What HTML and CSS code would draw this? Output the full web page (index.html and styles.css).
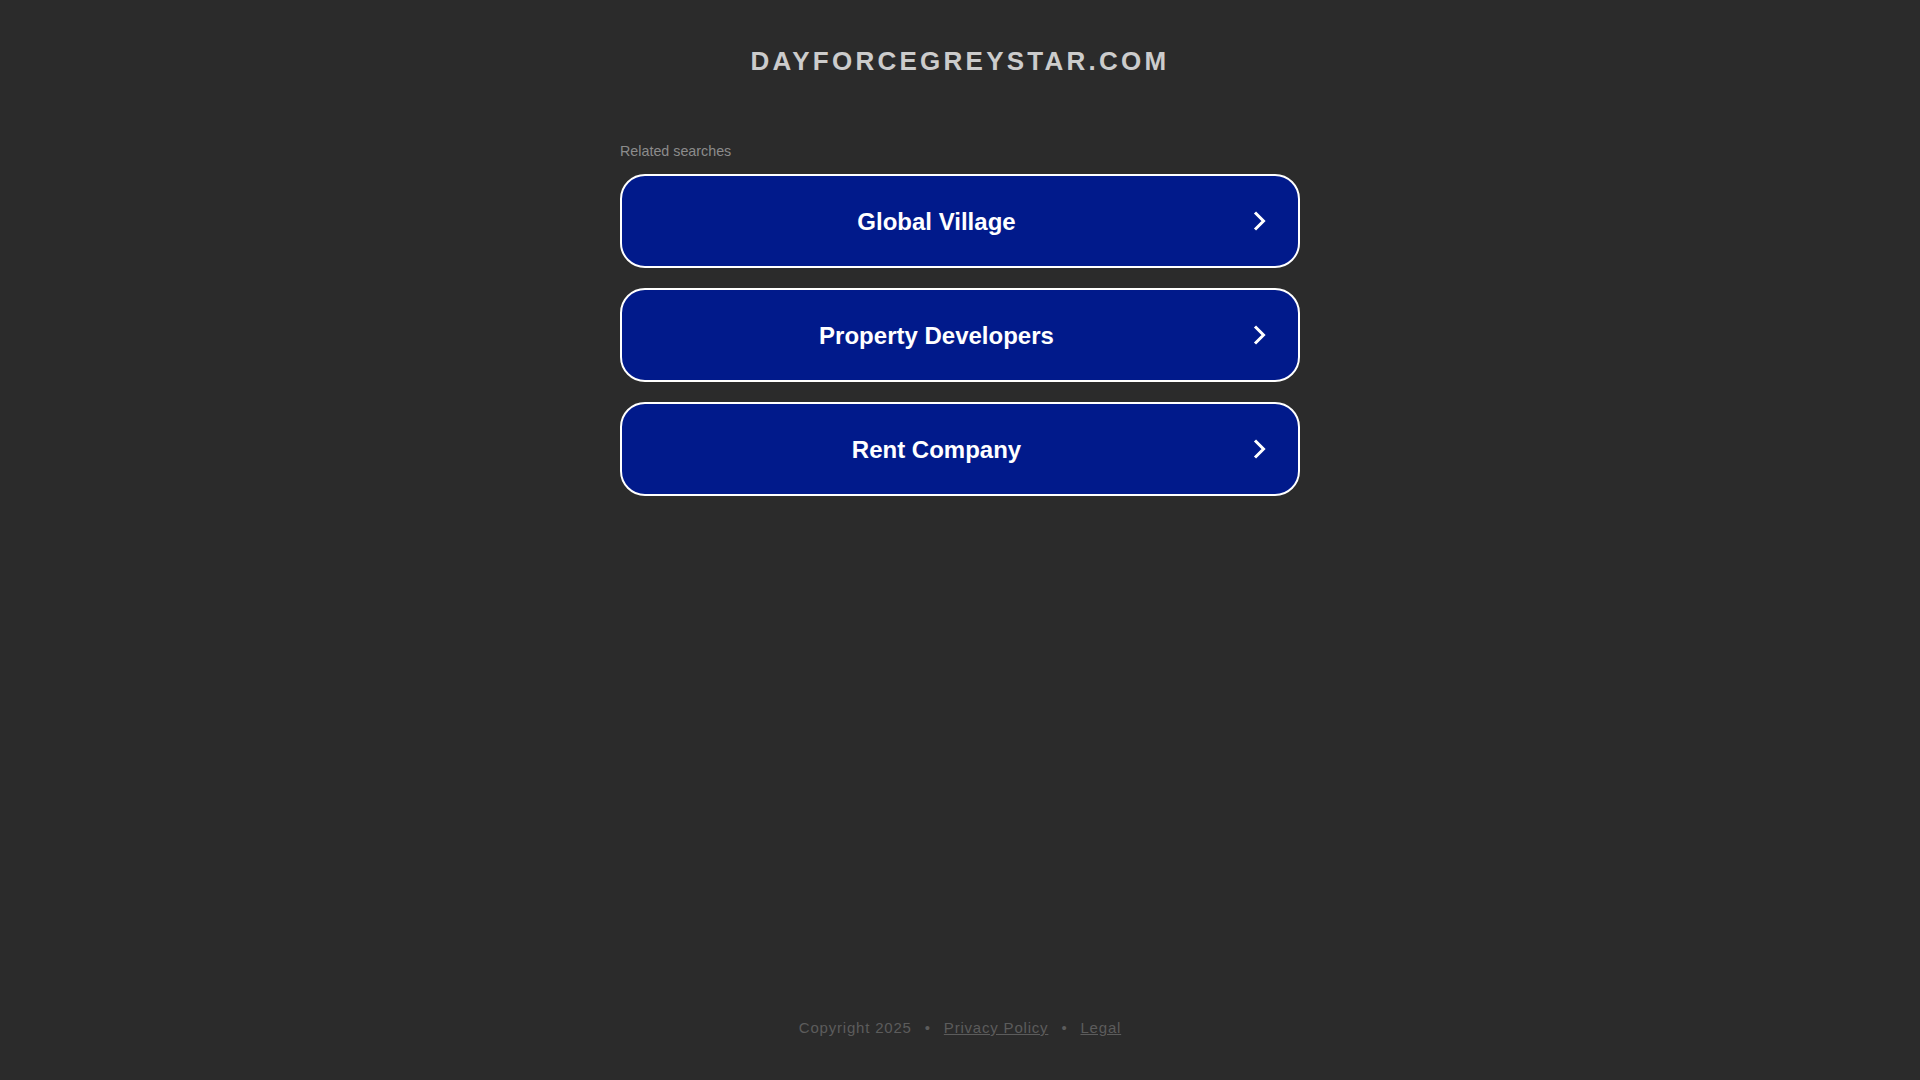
FILE: index.html
```html
<!DOCTYPE html>
<html lang="en">
<head>
<meta charset="utf-8">
<title>dayforcegreystar.com</title>
<link rel="stylesheet" href="styles.css">
</head>
<body>
<div class="page">
  <header class="header">
    <h1 class="domain">dayforcegreystar.com</h1>
  </header>
  <main class="main">
    <div class="related">Related searches</div>
    <ul class="links">
      <li><a class="link" href="#"><span class="label">Global Village</span><svg class="chev" viewBox="0 0 16 24" width="16" height="24"><path d="M4 3.5 L12.5 12 L4 20.5" fill="none" stroke="#fff" stroke-width="3"/></svg></a></li>
      <li><a class="link" href="#"><span class="label">Property Developers</span><svg class="chev" viewBox="0 0 16 24" width="16" height="24"><path d="M4 3.5 L12.5 12 L4 20.5" fill="none" stroke="#fff" stroke-width="3"/></svg></a></li>
      <li><a class="link" href="#"><span class="label">Rent Company</span><svg class="chev" viewBox="0 0 16 24" width="16" height="24"><path d="M4 3.5 L12.5 12 L4 20.5" fill="none" stroke="#fff" stroke-width="3"/></svg></a></li>
    </ul>
  </main>
  <footer class="footer">
    <span>Copyright 2025</span>
    <span class="dot">•</span>
    <a href="#">Privacy Policy</a>
    <span class="dot">•</span>
    <a href="#">Legal</a>
  </footer>
</div>
</body>
</html>
```

FILE: styles.css
```css
html, body {
  margin: 0;
  padding: 0;
  background: #2b2b2b;
  font-family: "Liberation Sans", Arial, sans-serif;
}

.page {
  min-height: 100vh;
  display: flex;
  flex-direction: column;
  align-items: center;
}

.header {
  padding-top: 46px;
}

.domain {
  margin: 0;
  font-size: 26px;
  line-height: 30px;
  font-weight: 700;
  letter-spacing: 3.25px;
  text-transform: uppercase;
  color: #cccccc;
  text-align: center;
}

.main {
  width: 680px;
  margin-top: 67px;
}

.related {
  font-size: 14.3px;
  line-height: 16px;
  color: #8c8c8c;
  margin-bottom: 15px;
}

.links {
  list-style: none;
  margin: 0;
  padding: 0;
  display: flex;
  flex-direction: column;
  gap: 20px;
}

.link {
  box-sizing: border-box;
  height: 94px;
  display: flex;
  align-items: center;
  background: #011a8b;
  border: 2px solid #fff;
  border-radius: 25px;
  text-decoration: none;
  color: #fff;
}

.label {
  flex: 1;
  text-align: center;
  font-size: 24px;
  font-weight: 700;
  padding-top: 2px;
}

.chev {
  margin-right: 31px;
  flex: none;
}

.footer {
  margin-top: auto;
  padding-bottom: 43px;
  display: flex;
  align-items: center;
  gap: 13px;
  font-size: 15px;
  line-height: 18px;
  letter-spacing: 0.8px;
  color: #5c5c5c;
}

.footer a {
  color: #5c5c5c;
  text-decoration: underline;
}
```
